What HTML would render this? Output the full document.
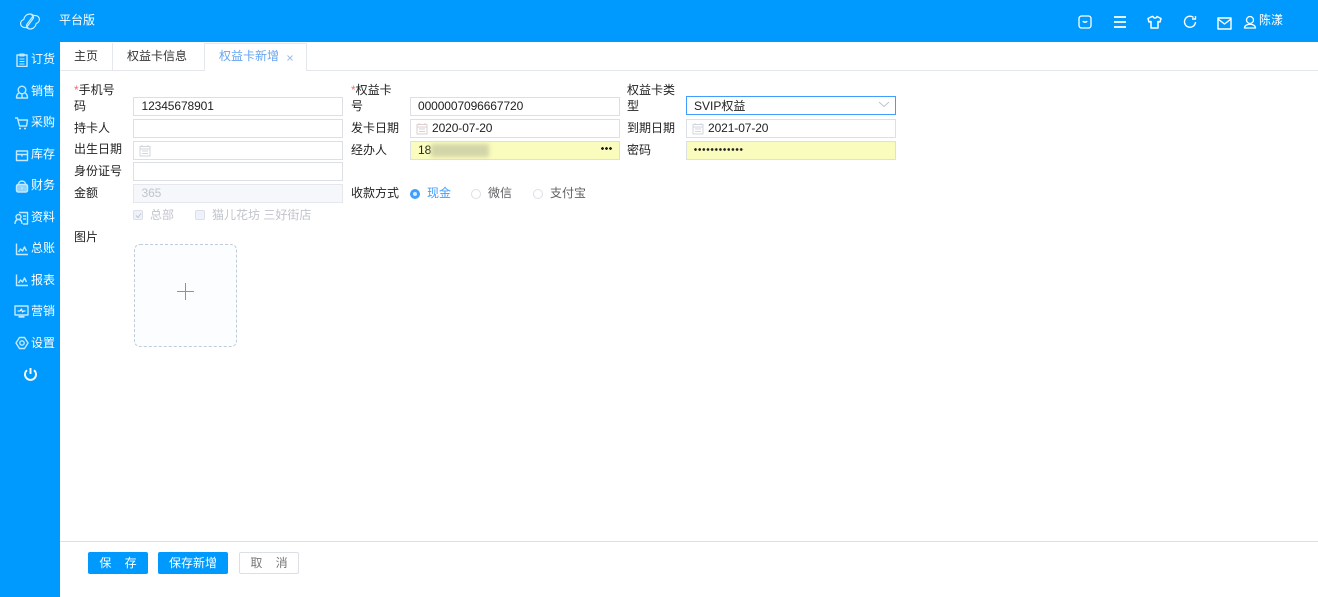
<!DOCTYPE html>
<html><head><meta charset="utf-8">
<style>
*{box-sizing:border-box}
html,body{margin:0;padding:0;width:1318px;height:597px;overflow:hidden;background:#fff;font-family:"Liberation Sans","Noto Sans CJK SC",sans-serif;font-size:12px;color:#333}
.a{position:absolute;white-space:nowrap}
.top{position:absolute;left:0;top:0;width:1318px;height:42px;background:#009aff}
.side{position:absolute;left:0;top:0;width:60px;height:597px;background:#009aff}
.m{position:absolute;left:31px;color:#fff;font-size:12px;line-height:16px}
svg{position:absolute;fill:none;stroke:#c4e8ff;stroke-width:1.4;stroke-linejoin:round}
.l{position:absolute;line-height:16px;color:#222;white-space:nowrap}
.i{position:absolute;height:19px;border:1px solid #dcdfe6;background:#fff;line-height:17px;padding-left:7.500px;color:#222;white-space:nowrap;letter-spacing:-.1px}
.y{background:#fafcbd}
</style></head><body>
<div class="top"></div><div class="side"></div>
<svg style="left:19px;top:12px" width="22" height="19" viewBox="0 0 22 19"><path d="M9 15.500H5.500a4 4 0 0 1-.8-7.900C5.500 4 8 2 11 2c1.500 0 2.500.5 3.500 1.500L8.500 11.500c-1.500 2-1.500 3 .5 4zM13 3.500h3.500a4 4 0 0 1 .8 7.900C16.500 15 14 17 11 17c-1.500 0-2.500-.5-3.500-1.500l6-8c1.500-2 1.500-3-.5-4z" style="stroke:#cfeeff;stroke-width:1.200"/></svg>
<div class="a" style="left:59px;top:12px;color:#fff;line-height:16px">平台版</div>

<svg style="left:1078px;top:15px" width="14" height="14" viewBox="0 0 14 14"><rect x="1" y="1" width="12" height="12" rx="2.500" style="stroke:#fff;stroke-width:1.300"/><path d="M5 6c.5 1.500 3.500 1.500 4 0" style="stroke:#fff"/></svg>
<svg style="left:1113px;top:15px" width="14" height="14" viewBox="0 0 14 14"><path d="M1 2h12M1 7h12M1 12h12" style="stroke:#fff;stroke-width:1.700"/></svg>
<svg style="left:1147px;top:15px" width="15" height="14" viewBox="0 0 15 14"><path d="M5 1.500 1 3.500 2 7l2-.5V13h7V6.500l2 .5 1-3.500-4-2c-.5 2-3.500 2-4 0z" style="stroke:#fff;stroke-width:1.500"/></svg>
<svg style="left:1183px;top:15px" width="14" height="14" viewBox="0 0 14 14"><path d="M10.500 2.500A5.500 5.500 0 1 0 12.500 7M9 4h3.500V1" style="stroke:#fff;stroke-width:1.400"/></svg>
<svg style="left:1217px;top:17px" width="15" height="13" viewBox="0 0 15 13"><rect x="1" y="1" width="13" height="11" style="stroke:#fff;stroke-width:1.400"/><path d="M1 2l6.500 5L14 2" style="stroke:#fff;stroke-width:1.400"/></svg>
<svg style="left:1243px;top:15px" width="14" height="14" viewBox="0 0 14 14"><circle cx="7" cy="5" r="3.500" style="stroke:#fff;stroke-width:1.300"/><path d="M1.500 13c0-5 11-5 11 0z" style="stroke:#fff;stroke-width:1.300"/></svg>
<div class="a" style="left:1259px;top:12px;color:#fff;line-height:16px">陈漾</div>

<svg style="left:15px;top:53px" width="14" height="14" viewBox="0 0 14 14"><rect x="2" y="2" width="10" height="11.500"/><path d="M5 1h4v2H5zM4.500 6h5M4.500 8.500h5M4.500 11h5" style="stroke-width:1.100"/></svg>
<div class="m" style="top:51px">订货</div>
<svg style="left:15px;top:85px" width="14" height="14" viewBox="0 0 14 14"><circle cx="7" cy="5" r="3.800"/><path d="M4 8C2 9 1.500 11 1.500 13h11c0-2-.5-4-2.500-5M7 9v4"/></svg>
<div class="m" style="top:83px">销售</div>
<svg style="left:14px;top:116px" width="15" height="14" viewBox="0 0 15 14"><path d="M1 2h2.500l2 8h7l1-6H4"/><path d="M5 12.500h2M10 12.500h2" style="stroke-width:1.600"/></svg>
<div class="m" style="top:114px">采购</div>
<svg style="left:15px;top:148px" width="14" height="14" viewBox="0 0 14 14"><rect x="1.500" y="3" width="11" height="9.500"/><path d="M1.500 6.500h11M7 6.500v2"/></svg>
<div class="m" style="top:146px">库存</div>
<svg style="left:15px;top:179px" width="14" height="14" viewBox="0 0 14 14"><rect x="1.500" y="5.500" width="11" height="7.500" rx="1.500" style="fill:#8fd3ff"/><path d="M3.500 5.500c0-4.500 7-4.500 7 0M7 8v2.500"/></svg>
<div class="m" style="top:177px">财务</div>
<svg style="left:14px;top:211px" width="15" height="14" viewBox="0 0 15 14"><path d="M5 1.500h8.500V13H9M1 13c0-3 1-4.500 3.500-4.500S8 10 8 13M4.500 8.500a2.500 2.500 0 1 0 0-5 2.500 2.500 0 0 0 0 5zM9 5h3M9 8h3"/></svg>
<div class="m" style="top:209px">资料</div>
<svg style="left:15px;top:242px" width="14" height="14" viewBox="0 0 14 14"><path d="M1.500 1.500V12.500H13M3.500 10l2-3 2 2 2-4 2 4"/></svg>
<div class="m" style="top:240px">总账</div>
<svg style="left:15px;top:273px" width="14" height="14" viewBox="0 0 14 14"><path d="M1.500 1.500V12.500H13M3.500 10l2-3 2 2 2-4 2 4"/></svg>
<div class="m" style="top:272px">报表</div>
<svg style="left:14px;top:304px" width="15" height="15" viewBox="0 0 15 15"><rect x="1" y="2" width="13" height="9"/><path d="M3.500 7h2.500l1.500-2 1 3 1-1h2" style="stroke:#fff;stroke-width:1.100"/><path d="M4.500 12.800h6" style="stroke-width:1.800"/></svg>
<div class="m" style="top:303px">营销</div>
<svg style="left:15px;top:336px" width="14" height="14" viewBox="0 0 14 14"><path d="M4.500 1.500h5l3.500 5.500-3.500 5.500h-5L1 7z"/><circle cx="7" cy="7" r="2.200"/></svg>
<div class="m" style="top:335px">设置</div>
<svg style="left:23px;top:367px" width="15" height="15" viewBox="0 0 15 15"><path d="M7.500 1v6M4 3.200a5.500 5.500 0 1 0 7 0" style="stroke:#fff;stroke-width:1.900"/></svg>

<!-- tabs -->
<div class="a" style="left:60px;top:70px;width:1258px;height:1px;background:#e4e7ed"></div>
<div class="a" style="left:112px;top:43px;width:1px;height:27px;background:#e4e7ed"></div>
<div class="a" style="left:204px;top:43px;width:1px;height:28px;background:#e4e7ed"></div>
<div class="a" style="left:306px;top:43px;width:1px;height:28px;background:#e4e7ed"></div>
<div class="a" style="left:205px;top:43px;width:101px;height:28px;background:#fff"></div>
<div class="a" style="left:205px;top:43px;width:101px;height:1px;background:#e4e7ed"></div>
<div class="a" style="left:74px;top:48px;line-height:16px">主页</div>
<div class="a" style="left:127px;top:48px;line-height:16px">权益卡信息</div>
<div class="a" style="left:219px;top:48px;line-height:16px;color:#66a5f0">权益卡新增</div>
<svg style="left:286px;top:54px" width="8" height="8" viewBox="0 0 8 8"><path d="M1.500 1.500l5 5M6.500 1.500l-5 5" style="stroke:#9dbde6;stroke-width:1"/></svg>

<!-- col1 -->
<div class="l" style="left:74px;top:82px"><span style="color:#f56c6c">*</span>手机号</div>
<div class="l" style="left:74px;top:98px">码</div>
<div class="i" style="left:133px;top:97px;width:210px">12345678901</div>
<div class="l" style="left:74px;top:120px">持卡人</div>
<div class="i" style="left:133px;top:119px;width:210px"></div>
<div class="l" style="left:74px;top:141px">出生日期</div>
<div class="i" style="left:133px;top:141px;width:210px"></div>
<svg style="left:139px;top:144px" width="12" height="13" viewBox="0 0 12 13"><path d="M1 2.500h10v9.500H1zM1 5h10M3 1v2M9 1v2M3 7h6M3 9.500h6" style="stroke:#d2d5dc;stroke-width:1"/></svg>
<div class="l" style="left:74px;top:163px">身份证号</div>
<div class="i" style="left:133px;top:162px;width:210px"></div>
<div class="l" style="left:74px;top:185px">金额</div>
<div class="i" style="left:133px;top:184px;width:210px;background:#f5f7fa;border-color:#e4e7ed;color:#c0c4cc">365</div>
<div class="a" style="left:133px;top:210px;width:10px;height:10px;border:1px solid #dcdfe6;background:#edf2fc;border-radius:2px"></div>
<svg style="left:134px;top:211px" width="9" height="9" viewBox="0 0 9 9"><path d="M2 4.500l2 2 3-4" style="stroke:#c0c4cc;stroke-width:1"/></svg>
<div class="a" style="left:150px;top:207px;line-height:16px;color:#c0c4cc">总部</div>
<div class="a" style="left:195px;top:210px;width:10px;height:10px;border:1px solid #dcdfe6;background:#edf2fc;border-radius:2px"></div>
<div class="a" style="left:212px;top:207px;line-height:16px;color:#c0c4cc">猫儿花坊 三好街店</div>
<div class="l" style="left:74px;top:229px">图片</div>
<div class="a" style="left:134px;top:244px;width:103px;height:103px;border:1px dashed #c0ccda;border-radius:6px;background:#fbfdff"></div>
<div class="a" style="left:177px;top:291px;width:17px;height:1px;background:#8c939d"></div>
<div class="a" style="left:185px;top:283px;width:1px;height:17px;background:#8c939d"></div>

<!-- col2 -->
<div class="l" style="left:351px;top:82px"><span style="color:#f56c6c">*</span>权益卡</div>
<div class="l" style="left:351px;top:98px">号</div>
<div class="i" style="left:410px;top:97px;width:210px;padding-left:7px">0000007096667720</div>
<div class="l" style="left:351px;top:120px">发卡日期</div>
<div class="i" style="left:410px;top:119px;width:210px;padding-left:21px">2020-07-20</div>
<svg style="left:416px;top:122px" width="12" height="13" viewBox="0 0 12 13"><path d="M1 2.500h10v9.500H1zM1 5h10M3 1v2M9 1v2M3 7h6M3 9.500h6" style="stroke:#dccfcf;stroke-width:1"/></svg>
<div class="l" style="left:351px;top:142px">经办人</div>
<div class="i y" style="left:410px;top:141px;width:210px;padding-left:7px">18</div>
<div class="a" style="left:431px;top:144px;width:58px;height:13px;background:#d2d5a8;filter:blur(2px)"></div>
<div class="a" style="left:601px;top:147px;width:11px;height:3px;background:radial-gradient(circle at 1.500px 1.500px,#222 1.300px,transparent 1.500px) 0 0/4px 3px repeat-x"></div>
<div class="l" style="left:351px;top:185px">收款方式</div>
<div class="a" style="left:410px;top:189px;width:10px;height:10px;border-radius:50%;background:#409eff"></div>
<div class="a" style="left:413px;top:192px;width:4px;height:4px;border-radius:50%;background:#fff;opacity:.8"></div>
<div class="a" style="left:427px;top:185px;line-height:16px;color:#409eff">现金</div>
<div class="a" style="left:471px;top:189px;width:10px;height:10px;border-radius:50%;border:1px solid #dcdfe6"></div>
<div class="a" style="left:488px;top:185px;line-height:16px;color:#606266">微信</div>
<div class="a" style="left:533px;top:189px;width:10px;height:10px;border-radius:50%;border:1px solid #dcdfe6"></div>
<div class="a" style="left:550px;top:185px;line-height:16px;color:#606266">支付宝</div>

<!-- col3 -->
<div class="l" style="left:627px;top:82px">权益卡类</div>
<div class="l" style="left:627px;top:98px">型</div>
<div class="i" style="left:686px;top:96px;width:210px;border-color:#409eff;padding-left:7px;line-height:18px;letter-spacing:0">SVIP权益</div>
<svg style="left:878px;top:101px" width="12" height="7" viewBox="0 0 12 7"><path d="M1 1l5 4.500L11 1" style="stroke:#c0c4cc;stroke-width:1"/></svg>
<div class="l" style="left:627px;top:120px">到期日期</div>
<div class="i" style="left:686px;top:119px;width:210px;padding-left:21px">2021-07-20</div>
<svg style="left:692px;top:122px" width="12" height="13" viewBox="0 0 12 13"><path d="M1 2.500h10v9.500H1zM1 5h10M3 1v2M9 1v2M3 7h6M3 9.500h6" style="stroke:#d2d5dc;stroke-width:1"/></svg>
<div class="l" style="left:627px;top:142px">密码</div>
<div class="i y" style="left:686px;top:141px;width:210px"></div>
<div class="a" style="left:694px;top:148px;width:50px;height:3px;background:radial-gradient(circle at 1.500px 1.500px,#222 1.200px,transparent 1.500px) 0 0/4.170px 3px repeat-x"></div>

<!-- footer -->
<div class="a" style="left:60px;top:541px;width:1258px;height:1px;background:#dcdfe6"></div>
<div class="a" style="left:88px;top:552px;width:60px;height:22px;background:#009aff;border-radius:2px;color:#fff;line-height:22px;text-align:center">保&nbsp;&nbsp;&nbsp;&nbsp;存</div>
<div class="a" style="left:158px;top:552px;width:70px;height:22px;background:#009aff;border-radius:2px;color:#fff;line-height:22px;text-align:center">保存新增</div>
<div class="a" style="left:239px;top:552px;width:60px;height:22px;border:1px solid #dcdfe6;border-radius:2px;color:#777;line-height:20px;text-align:center">取&nbsp;&nbsp;&nbsp;&nbsp;消</div>
</body></html>
